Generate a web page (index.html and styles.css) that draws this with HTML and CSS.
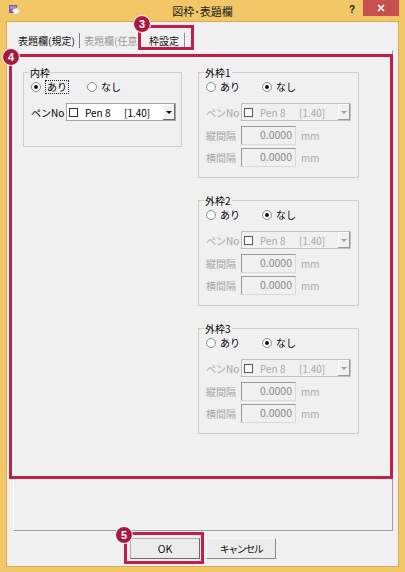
FILE: index.html
```html
<!DOCTYPE html>
<html lang="ja">
<head>
<meta charset="utf-8">
<title>図枠･表題欄</title>
<link rel="stylesheet" href="styles.css">
</head>
<body>
<div class="window">
  <div class="titlebar">
    <div class="tb-left">
      <svg class="app-icon" width="12" height="10" viewBox="0 0 12 10">
        <rect x="0" y="0" width="8" height="8" fill="#7d5aa6"/>
        <rect x="1" y="1" width="6" height="3" fill="#a68bc9"/>
        <polygon points="3,5 8,3 11,7 6,9.5" fill="#ffffff" stroke="#c9c0d8" stroke-width="0.5"/>
      </svg>
    </div>
    <div class="title">図枠･表題欄</div>
    <div class="tb-right">
      <span class="help">?</span>
      <span class="close">
        <svg width="8" height="8" viewBox="0 0 8 8"><path d="M1 1 L7 7 M7 1 L1 7" stroke="#fff" stroke-width="1.6"/></svg>
      </span>
    </div>
  </div>

  <div class="client">
    <div class="tabs">
      <div class="tab t1">表題欄(規定)</div>
      <div class="tab t2">表題欄(任意</div>
      <div class="tab t3">枠設定</div>
    </div>

    <div class="panel">
      <div class="col-left">
        <div class="group g-inner">
          <div class="legend">内枠</div>
          <div class="radios">
            <div class="radio on"><span class="circle"></span><span class="rtext focus">あり</span></div>
            <div class="radio"><span class="circle"></span><span class="rtext">なし</span></div>
          </div>
          <div class="row pen">
            <span class="flabel">ペンNo</span>
            <div class="combo">
              <span class="chk"></span><span class="pname">Pen 8</span><span class="pw">[1.40]</span>
              <span class="drop"><span class="arrow"></span></span>
            </div>
          </div>
        </div>
      </div>

      <div class="col-right">
        <div class="group g-outer">
          <div class="legend">外枠1</div>
          <div class="radios">
            <div class="radio"><span class="circle"></span><span class="rtext">あり</span></div>
            <div class="radio on"><span class="circle"></span><span class="rtext">なし</span></div>
          </div>
          <div class="row pen dis">
            <span class="flabel">ペンNo</span>
            <div class="combo">
              <span class="chk"></span><span class="pname">Pen 8</span><span class="pw">[1.40]</span>
              <span class="drop"><span class="arrow"></span></span>
            </div>
          </div>
          <div class="row num r1 dis"><span class="flabel">縦間隔</span><span class="input">0.0000</span><span class="unit">mm</span></div>
          <div class="row num r2 dis"><span class="flabel">横間隔</span><span class="input">0.0000</span><span class="unit">mm</span></div>
        </div>

        <div class="group g-outer">
          <div class="legend">外枠2</div>
          <div class="radios">
            <div class="radio"><span class="circle"></span><span class="rtext">あり</span></div>
            <div class="radio on"><span class="circle"></span><span class="rtext">なし</span></div>
          </div>
          <div class="row pen dis">
            <span class="flabel">ペンNo</span>
            <div class="combo">
              <span class="chk"></span><span class="pname">Pen 8</span><span class="pw">[1.40]</span>
              <span class="drop"><span class="arrow"></span></span>
            </div>
          </div>
          <div class="row num r1 dis"><span class="flabel">縦間隔</span><span class="input">0.0000</span><span class="unit">mm</span></div>
          <div class="row num r2 dis"><span class="flabel">横間隔</span><span class="input">0.0000</span><span class="unit">mm</span></div>
        </div>

        <div class="group g-outer">
          <div class="legend">外枠3</div>
          <div class="radios">
            <div class="radio"><span class="circle"></span><span class="rtext">あり</span></div>
            <div class="radio on"><span class="circle"></span><span class="rtext">なし</span></div>
          </div>
          <div class="row pen dis">
            <span class="flabel">ペンNo</span>
            <div class="combo">
              <span class="chk"></span><span class="pname">Pen 8</span><span class="pw">[1.40]</span>
              <span class="drop"><span class="arrow"></span></span>
            </div>
          </div>
          <div class="row num r1 dis"><span class="flabel">縦間隔</span><span class="input">0.0000</span><span class="unit">mm</span></div>
          <div class="row num r2 dis"><span class="flabel">横間隔</span><span class="input">0.0000</span><span class="unit">mm</span></div>
        </div>
      </div>
    </div>

    <div class="buttons">
      <button class="btn ok">OK</button>
      <button class="btn cancel">キャンセル</button>
    </div>
  </div>

  <div class="anno-rect ar3"></div>
  <div class="anno-rect ar4"></div>
  <div class="anno-rect ar5"></div>
  <div class="anno-num an3">3</div>
  <div class="anno-num an4">4</div>
  <div class="anno-num an5">5</div>
</div>
</body>
</html>
```

FILE: styles.css
```css
html, body {
  margin: 0;
  padding: 0;
  background: #ffffff;
}

body {
  font-family: "Noto Sans CJK JP", "Liberation Sans", sans-serif;
  color: #000;
}

.window {
  position: relative;
  width: 405px;
  height: 572px;
  box-sizing: border-box;
  padding: 0 7px 6px 7px;
  background: #f1c767;
  display: flex;
  flex-direction: column;
}

/* title bar */
.titlebar {
  height: 22px;
  margin: 0 -7px;
  padding: 0 6px;
  display: grid;
  grid-template-columns: 1fr auto 1fr;
  align-items: start;
}

.tb-left {
  padding: 5px 0 0 3px;
}

.app-icon {
  display: block;
}

.title {
  font-size: 11px;
  line-height: 23px;
  color: #1b1b1b;
}

.tb-right {
  display: flex;
  justify-content: flex-end;
  align-items: flex-start;
}

.help {
  font: bold 10px "Liberation Sans", sans-serif;
  margin: 4px 8px 0 0;
  color: #1b1b1b;
}

.close {
  width: 36px;
  height: 16px;
  background: #c75050;
  display: flex;
  align-items: center;
  justify-content: center;
}

.close svg {
  display: block;
}

/* client */
.client {
  flex: 1;
  background: #f0f0f0;
  padding: 8px 5px 0 6px;
  display: flex;
  flex-direction: column;
  box-shadow: 0 0 0 1px #d9ab55;
}

/* tabs */
.tabs {
  height: 20px;
  box-sizing: border-box;
  padding-top: 3px;
  display: flex;
  font-size: 10px;
}

.tab {
  height: 15px;
  line-height: 15px;
  white-space: nowrap;
  box-sizing: border-box;
}

.t1 {
  width: 67px;
  padding-left: 5px;
  border-right: 1px solid #7e7e7e;
  color: #111;
}

.t2 {
  width: 59px;
  padding-left: 4px;
  color: #9b9b9b;
}

.t3 {
  width: 46px;
  padding-left: 10px;
  border-right: 1px solid #8c8c8c;
  color: #111;
}

/* panel */
.panel {
  height: 481px;
  box-sizing: border-box;
  border: 1px solid;
  border-color: #ffffff #a0a0a0 #a0a0a0 #ffffff;
  padding: 21px 0 0 9px;
  display: flex;
  gap: 16px;
  align-items: flex-start;
}

.col-right {
  display: flex;
  flex-direction: column;
  gap: 22px;
}

.group {
  border: 1px solid #cdcdcd;
  box-sizing: border-box;
  padding: 0 0 0 7px;
  font-size: 10px;
}

.g-inner {
  width: 159px;
  height: 75px;
}

.g-outer {
  width: 161px;
  height: 106px;
}

.legend {
  width: fit-content;
  height: 13px;
  line-height: 13px;
  margin: -7px 0 0 -2px;
  padding: 0 1px;
  background: #f0f0f0;
}

.radios {
  height: 16px;
  display: flex;
  align-items: center;
}

.radio {
  display: flex;
  align-items: center;
}

.radio:first-child {
  width: 56px;
}

.circle {
  width: 10px;
  height: 10px;
  box-sizing: border-box;
  border: 1px solid #8c8c8c;
  border-radius: 50%;
  background: #fdfdfd;
  margin-right: 4px;
  display: flex;
  align-items: center;
  justify-content: center;
}

.radio.on .circle::after {
  content: "";
  width: 4px;
  height: 4px;
  border-radius: 50%;
  background: #111;
}

.rtext {
  line-height: 12px;
}

.focus {
  outline: 1px dotted #222;
  outline-offset: 0;
  padding: 0 1px;
  margin-left: 1px;
}

.row {
  display: flex;
  align-items: center;
}

.flabel {
  width: 35px;
  flex: none;
}

.pen {
  margin-top: 8px;
  height: 18px;
}

.combo {
  width: 110px;
  height: 18px;
  box-sizing: border-box;
  border: 1px solid #a6a6a6;
  background: #ffffff;
  display: flex;
  align-items: center;
  font-size: 10px;
}

.chk {
  width: 9px;
  height: 9px;
  box-sizing: border-box;
  border: 1px solid #333;
  background: #fff;
  margin-left: 2px;
  flex: none;
}

.pname {
  width: 39px;
  margin-left: 7px;
  white-space: nowrap;
}

.pw {
  white-space: nowrap;
}

.drop {
  margin-left: auto;
  width: 12px;
  height: 16px;
  box-sizing: border-box;
  background: #f0f0f0;
  box-shadow: inset -1px -1px 0 #6b6b6b, inset 1px 1px 0 #ffffff;
  display: flex;
  align-items: center;
  justify-content: center;
}

.arrow {
  width: 0;
  height: 0;
  border-left: 3px solid transparent;
  border-right: 3px solid transparent;
  border-top: 3px solid #111;
}

.num {
  height: 19px;
}

.r1 {
  margin-top: 5px;
}

.r2 {
  margin-top: 3px;
}

.input {
  width: 55px;
  height: 19px;
  box-sizing: border-box;
  border: 1px solid;
  border-color: #9a9a9a #dadada #dadada #9a9a9a;
  background: #f0f0f0;
  text-align: right;
  padding-right: 3px;
  line-height: 16px;
  font-size: 10.5px;
  color: #8a8a8a;
}

.unit {
  margin-left: 5px;
  color: #a8a8a8;
}

/* disabled state */
.dis .flabel {
  color: #a6a6a6;
}

.dis .combo {
  background: #f0f0f0;
  border-color: #c2c2c2;
  color: #a8a8a8;
}

.dis .chk {
  border-color: #555;
}

.dis .drop {
  box-shadow: inset -1px -1px 0 #9a9a9a, inset 1px 1px 0 #ffffff;
}

.dis .arrow {
  border-top-color: #a0a0a0;
}

/* buttons */
.buttons {
  margin-top: 7px;
  display: flex;
  justify-content: center;
  gap: 6px;
}

.btn {
  width: 70px;
  height: 21px;
  box-sizing: border-box;
  margin: 0;
  padding: 0;
  font-family: "Noto Sans CJK JP", "Liberation Sans", sans-serif;
  font-size: 10.5px;
  color: #111;
  background: #ececec;
  border: 1px solid;
  border-color: #f7f7f7 #8a8a8a #8a8a8a #f7f7f7;
}

.ok {
  border-color: #b0b0b0 #6a6a6a #6a6a6a #b0b0b0;
}

.cancel {
  font-size: 10px;
  letter-spacing: -1.5px;
}

/* annotations (overlay) */
.anno-rect {
  position: absolute;
  box-sizing: border-box;
  border: 3px solid #c31d4c;
}

.ar3 { left: 138px; top: 25px; width: 56px; height: 25px; }
.ar4 { left: 9px; top: 54px; width: 384px; height: 425px; }
.ar5 { left: 124px; top: 532px; width: 80px; height: 32px; }

.anno-num {
  position: absolute;
  width: 18px;
  height: 18px;
  box-sizing: border-box;
  border-radius: 50%;
  border: 1.5px solid #ffffff;
  background: #a9183f;
  color: #ffffff;
  font: bold 11px "Liberation Sans", sans-serif;
  display: flex;
  align-items: center;
  justify-content: center;
}

.an3 { left: 133px; top: 15px; }
.an4 { left: 2px; top: 48px; }
.an5 { left: 115px; top: 526px; }
```
